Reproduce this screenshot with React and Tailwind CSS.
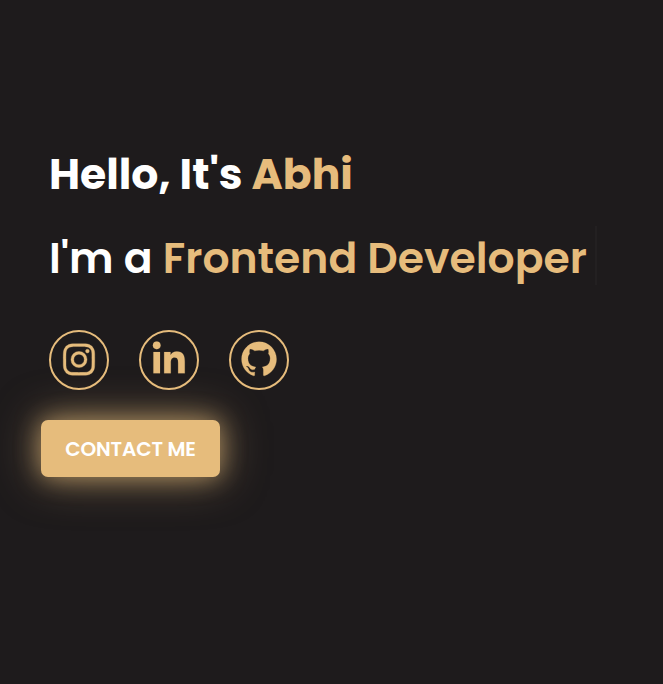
import { BiLogoInstagram, BiLogoLinkedin, BiLogoGithub } from "react-icons/bi";

const socials = [
  { label: "Instagram", Icon: BiLogoInstagram, shift: "-translate-y-[0.5px] stroke-[0.2px]" },
  { label: "LinkedIn", Icon: BiLogoLinkedin, shift: "-translate-y-[2.4px] stroke-[0.1px]" },
  { label: "GitHub", Icon: BiLogoGithub, shift: "-translate-y-[0.7px] stroke-[0.15px]" },
];

export default function App() {
  return (
    <main className="h-[684px] w-full overflow-hidden bg-[#1e1b1c] pl-[49px] pt-[144px] font-[Poppins,sans-serif] text-white">
      <h1 className="flex h-[60px] items-center whitespace-pre text-[42.5px] font-bold leading-none">
        <span>Hello, It's </span>
        <span className="text-[#e6bc7c]">Abhi</span>
      </h1>
      <h2 className="mt-[22px] flex h-[64px] items-start whitespace-pre text-[42.5px] font-semibold leading-[64px]">
        <span>I'm a </span>
        <span className="h-[59px] w-[434px] border-r-2 border-[#232021] text-[#e6bc7c]">Frontend Developer</span>
      </h2>
      <div className="mt-[40px] flex gap-[30px]">
        {socials.map(({ label, Icon, shift }) => (
          <a key={label} aria-label={label} className="flex size-[60px] items-center justify-center rounded-full border-2 border-[#e6bc7c] text-[#e6bc7c]">
            <Icon size={42} className={shift} />
          </a>
        ))}
      </div>
      <button className="-ml-2 mt-[30.4px] flex h-[56.4px] w-[179px] items-center justify-center rounded-[7px] bg-[#e6bc7c] text-[20px] font-semibold tracking-[-0.12px] shadow-[0_0_25px_#e6bc7c90,0_0_45px_#e6bc7c80]">
        CONTACT ME
      </button>
    </main>
  );
}
